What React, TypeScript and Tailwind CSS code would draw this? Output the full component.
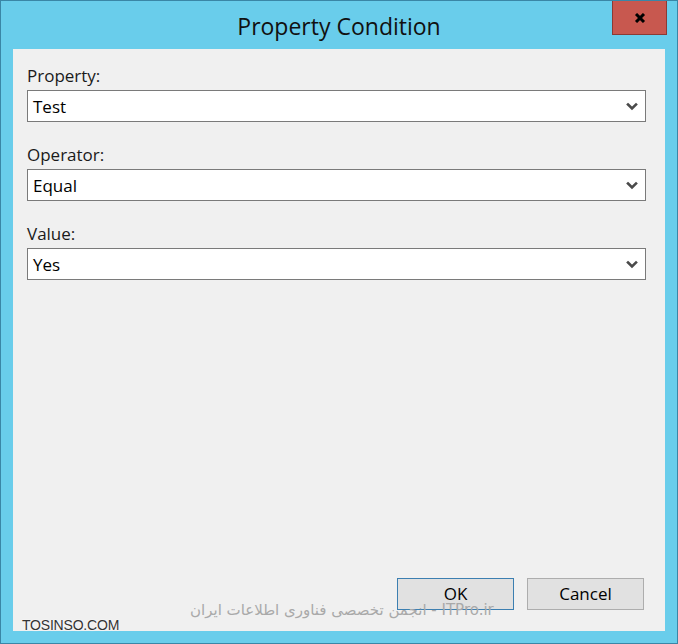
import React from 'react'

function Chevron() {
  return (
    <svg width="12" height="9" viewBox="0 0 12 9" fill="none" stroke="#4a4a4a" strokeWidth="2.6" strokeLinecap="square">
      <polyline points="2 2.5 6 6.5 10 2.5" />
    </svg>
  )
}

function Field({ label, value }: { label: string; value: string }) {
  return (
    <div className="flex flex-col">
      <div className="h-[20px] leading-[20px] text-[17px] text-[#1a1a1a]">{label}</div>
      <div className="mt-[4px] h-[32px] bg-white border border-[#7a7a7a] flex items-center justify-between pl-[5px] pr-[7px]">
        <span className="text-[17px] text-black leading-none">{value}</span>
        <Chevron />
      </div>
    </div>
  )
}

export default function App() {
  return (
    <div
      className="relative w-[678px] h-[644px] bg-[#69cdeb] border border-[#3a86a6] flex flex-col"
      style={{ fontFamily: '"Open Sans", "Liberation Sans", sans-serif' }}
    >
      <div className="h-[48px] flex items-center justify-center">
        <span className="text-[23px] text-[#111] leading-none mt-[2px]">Property Condition</span>
      </div>

      <button className="absolute top-0 right-[10px] w-[55px] h-[34px] bg-[#c8584f] border border-t-0 border-[#8c3a34] flex items-center justify-center">
        <svg width="12" height="10" viewBox="0 0 12 10" stroke="#000" strokeWidth="3">
          <line x1="2" y1="1" x2="10" y2="9" />
          <line x1="10" y1="1" x2="2" y2="9" />
        </svg>
      </button>

      <div className="mx-[12px] mb-[12px] flex-1 bg-[#f0f0f0] flex flex-col pl-[14px] pr-[19px] pt-[17px] pb-[21px]">
        <div className="flex flex-col gap-[23px]">
          <Field label="Property:" value="Test" />
          <Field label="Operator:" value="Equal" />
          <Field label="Value:" value="Yes" />
        </div>

        <div className="mt-auto flex justify-end gap-[13px] pr-[2px]">
          <button className="w-[117px] h-[32px] bg-[#e1e1e1] border border-[#3c7fb1] text-[17px] text-black">OK</button>
          <button className="w-[117px] h-[32px] bg-[#e1e1e1] border border-[#adadad] text-[17px] text-black">Cancel</button>
        </div>
      </div>

      <div
        dir="rtl"
        className="absolute left-[189px] top-[598px] text-[15px] text-[#a9a9a9] whitespace-nowrap"
        style={{ fontFamily: '"DejaVu Sans", sans-serif' }}
      >
        ITPro.ir - انجمن تخصصی فناوری اطلاعات ایران
      </div>
      <div
        className="absolute left-[21px] top-[614px] text-[14px] text-[#333] tracking-[-0.2px]"
        style={{ fontFamily: '"Liberation Sans", sans-serif', textShadow: '0 0 2px #fff' }}
      >
        TOSINSO.COM
      </div>
    </div>
  )
}
